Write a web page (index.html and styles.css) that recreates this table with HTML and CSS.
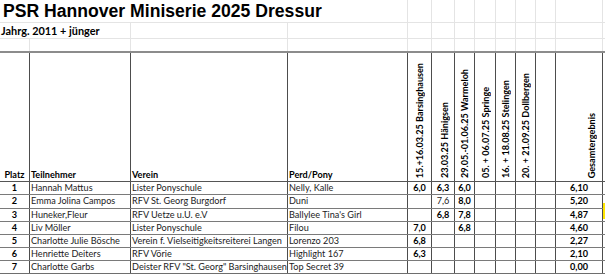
FILE: index.html
```html
<!DOCTYPE html>
<html lang="de">
<head>
<meta charset="utf-8">
<title>PSR Hannover Miniserie 2025 Dressur</title>
<link rel="stylesheet" href="styles.css">
</head>
<body>
<div class="sheet">
  <div class="row row-title">
    <div class="c g span4 title">PSR Hannover Miniserie 2025 Dressur</div>
    <div class="c g"></div><div class="c g"></div><div class="c g"></div><div class="c g"></div>
    <div class="c g"></div><div class="c g"></div><div class="c g"></div><div class="c g"></div>
  </div>
  <div class="row row-sub">
    <div class="c g span2 sub">Jahrg. 2011 + jünger</div>
    <div class="c g"></div><div class="c g"></div><div class="c g"></div><div class="c g"></div><div class="c g"></div>
    <div class="c g"></div><div class="c g"></div><div class="c g"></div><div class="c g"></div><div class="c g"></div>
  </div>
  <div class="row row-blank">
    <div class="c g"></div><div class="c g"></div><div class="c g"></div><div class="c g"></div>
    <div class="c g"></div><div class="c g"></div><div class="c g"></div><div class="c g"></div>
    <div class="c g"></div><div class="c g"></div><div class="c g"></div><div class="c g"></div>
  </div>
  <div class="row row-head">
    <div class="c h ctr">Platz</div>
    <div class="c h">Teilnehmer</div>
    <div class="c h">Verein</div>
    <div class="c h">Perd/Pony</div>
    <div class="c h rot rot-first"><span>15.+16.03.25 Barsinghausen</span></div>
    <div class="c h rot"><span>23.03.25 Hänigsen</span></div>
    <div class="c h rot"><span>29.05.-01.06.25 Warmeloh</span></div>
    <div class="c h rot"><span>05. + 06.07.25 Springe</span></div>
    <div class="c h rot"><span>16. + 18.08.25 Stelingen</span></div>
    <div class="c h rot"><span>20. + 21.09.25 Dollbergen</span></div>
    <div class="c h rot"><span></span></div>
    <div class="c h rot rot-total"><span>Gesamtergebnis</span></div>
  </div>

  <div class="row row-data r13">
    <div class="c b ctr">1</div><div class="c">Hannah Mattus</div><div class="c">Lister Ponyschule</div><div class="c">Nelly, Kalle</div>
    <div class="c b ctr">6,0</div><div class="c b ctr">6,3</div><div class="c b ctr">6,0</div><div class="c"></div>
    <div class="c"></div><div class="c"></div><div class="c"></div><div class="c b ctr">6,10</div>
  </div>
  <div class="row row-data r14">
    <div class="c b ctr">2</div><div class="c">Emma Jolina Campos</div><div class="c">RFV St. Georg Burgdorf</div><div class="c">Duni</div>
    <div class="c"></div><div class="c ctr">7,6</div><div class="c b ctr">8,0</div><div class="c"></div>
    <div class="c"></div><div class="c"></div><div class="c"></div><div class="c b ctr">5,20</div>
  </div>
  <div class="row row-data r13">
    <div class="c b ctr">3</div><div class="c">Huneker,Fleur</div><div class="c">RFV Uetze u.U. e.V</div><div class="c">Ballylee Tina's Girl</div>
    <div class="c"></div><div class="c b ctr">6,8</div><div class="c b ctr">7,8</div><div class="c"></div>
    <div class="c"></div><div class="c"></div><div class="c"></div><div class="c b ctr">4,87</div>
    <div class="marker"></div>
  </div>
  <div class="row row-data r13">
    <div class="c b ctr">4</div><div class="c">Liv Möller</div><div class="c">Lister Ponyschule</div><div class="c">Filou</div>
    <div class="c b ctr">7,0</div><div class="c"></div><div class="c b ctr">6,8</div><div class="c"></div>
    <div class="c"></div><div class="c"></div><div class="c"></div><div class="c b ctr">4,60</div>
  </div>
  <div class="row row-data r13">
    <div class="c b ctr">5</div><div class="c">Charlotte Julie Bösche</div><div class="c">Verein f. Vielseitigkeitsreiterei Langen</div><div class="c">Lorenzo 203</div>
    <div class="c b ctr">6,8</div><div class="c"></div><div class="c"></div><div class="c"></div>
    <div class="c"></div><div class="c"></div><div class="c"></div><div class="c b ctr">2,27</div>
  </div>
  <div class="row row-data r13">
    <div class="c b ctr">6</div><div class="c">Henriette Deiters</div><div class="c">RFV Vörie</div><div class="c">Highlight 167</div>
    <div class="c b ctr">6,3</div><div class="c"></div><div class="c"></div><div class="c"></div>
    <div class="c"></div><div class="c"></div><div class="c"></div><div class="c b ctr">2,10</div>
  </div>
  <div class="row row-data r-last">
    <div class="c b ctr">7</div><div class="c">Charlotte Garbs</div><div class="c">Deister RFV "St. Georg" Barsinghausen</div><div class="c">Top Secret 39</div>
    <div class="c"></div><div class="c"></div><div class="c"></div><div class="c"></div>
    <div class="c"></div><div class="c"></div><div class="c"></div><div class="c b ctr">0,00</div>
  </div>
</div>
</body>
</html>
```
FILE: styles.css
```css
html, body {
  margin: 0;
  padding: 0;
  background: #ffffff;
}

.sheet {
  width: 605px;
  font-family: "Lato", "Open Sans", sans-serif;
  font-size: 9.15px;
  color: #1c1c24;
}

.row {
  display: grid;
  grid-template-columns: 30px 101px 157px 120px 24px 23px 20px 21px 20px 20px 20px 47px 1fr;
  box-sizing: border-box;
  position: relative;
}

.c {
  box-sizing: border-box;
  border-right: 1px solid #4d4d4d;
  white-space: nowrap;
  overflow: hidden;
  padding-left: 1px;
  line-height: 12px;
}

/* top area with light spreadsheet gridlines */
.g {
  border-right-color: #e4e4e4;
}

.row-title {
  height: 23px;
  border-bottom: 1px solid #e4e4e4;
}

.row-sub {
  height: 16px;
  border-bottom: 1px solid #e4e4e4;
}

.row-blank {
  height: 12px;
}

.span4 { grid-column: span 4; }
.span2 { grid-column: span 2; }

.title {
  font-family: "Liberation Sans", Arial, sans-serif;
  font-weight: 700;
  font-size: 17.6px;
  line-height: 21px;
  padding: 1px 0 0 3px;
  color: #000;
}

.sub {
  font-weight: 700;
  font-size: 10.9px;
  line-height: 14px;
  padding: 1px 0 0 1px;
  color: #000;
}

/* header */
.row-head {
  height: 131px;
  border-top: 2px solid #8c8c8c;
  border-bottom: 1px solid #555555;
}

.h {
  font-weight: 700;
  color: #000;
  display: flex;
  align-items: flex-end;
  padding-bottom: 0;
}

.h.ctr {
  justify-content: center;
  padding-left: 0;
}

.rot {
  justify-content: flex-end;
  padding-right: 3px;
  padding-bottom: 3px;
}

.rot-first {
  padding-right: 5px;
}

.rot-total {
  padding-right: 4px;
}

.rot span {
  writing-mode: vertical-rl;
  transform: rotate(180deg);
  font-size: 9.1px;
  line-height: 12px;
  white-space: nowrap;
}

/* data */
.row-data {
  border-bottom: 1px solid #7a7a7a;
}

.r13 { height: 13px; }
.r14 { height: 14px; }
.r-last {
  height: 14px;
  border-bottom: 2px solid #6e6e6e;
}

.b {
  font-weight: 700;
  color: #000;
}

.ctr {
  text-align: center;
  padding-left: 0;
}

.marker {
  position: absolute;
  left: 603px;
  top: -6px;
  width: 2px;
  height: 16px;
  background: #ffe600;
}
```
